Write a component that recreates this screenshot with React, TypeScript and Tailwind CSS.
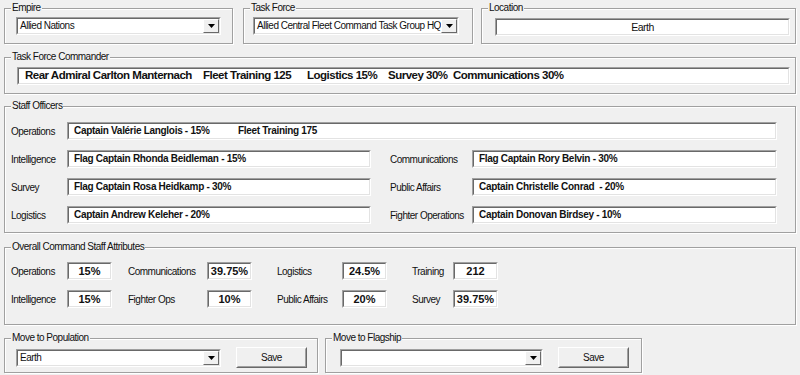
import React from "react";

function Group({ title, className, children }: { title: string; className?: string; children?: React.ReactNode }) {
    return (
        <div className={`relative border border-[#a0a0a0] shadow-[inset_1px_1px_0_#fff,1px_1px_0_#fff] ${className ?? ""}`}>
            <span className="absolute left-[6px] top-[-8px] bg-[#f0f0f0] px-[1px] leading-[14px] whitespace-nowrap">{title}</span>
            {children}
        </div>
    );
}

function Sunken({ className, children, center }: { className?: string; children?: React.ReactNode; center?: boolean }) {
    return (
        <div className={`shrink-0 border border-t-[#a0a0a0] border-l-[#a0a0a0] border-b-white border-r-white ${className ?? ""}`}>
            <div
                className={`h-full w-full overflow-hidden whitespace-pre border border-t-[#696969] border-l-[#696969] border-b-[#e3e3e3] border-r-[#e3e3e3] bg-white flex items-center leading-none ${center ? "justify-center" : ""}`}
            >
                {children}
            </div>
        </div>
    );
}

function Combo({ value, className }: { value: string; className?: string }) {
    return (
        <Sunken className={className}>
            <span className="flex-1 overflow-hidden pl-[2px]">{value}</span>
            <div className="h-full w-[16px] shrink-0 flex items-center justify-center bg-[#f0f0f0] border border-t-white border-l-white border-b-[#696969] border-r-[#696969]">
                <svg width="7" height="4" viewBox="0 0 7 4">
                    <path d="M0 0h7L3.5 4z" fill="#000" />
                </svg>
            </div>
        </Sunken>
    );
}

function SaveButton() {
    return (
        <div className="w-[71px] h-[21px] shrink-0 border border-t-white border-l-white border-b-[#696969] border-r-[#696969]">
            <div className="h-full w-full border border-t-[#f0f0f0] border-l-[#f0f0f0] border-b-[#a0a0a0] border-r-[#a0a0a0] flex items-center justify-center bg-[#f0f0f0]">
                Save
            </div>
        </div>
    );
}

const staffRows = [
    ["Intelligence", "Flag Captain Rhonda Beidleman - 15%", "Communications", "Flag Captain Rory Belvin - 30%"],
    ["Survey", "Flag Captain Rosa Heidkamp - 30%", "Public Affairs", "Captain Christelle Conrad  - 20%"],
    ["Logistics", "Captain Andrew Keleher - 20%", "Fighter Operations", "Captain Donovan Birdsey - 10%"],
];

const attrs = [
    ["Operations", "15%", "Communications", "39.75%", "Logistics", "24.5%", "Training", "212"],
    ["Intelligence", "15%", "Fighter Ops", "10%", "Public Affairs", "20%", "Survey", "39.75%"],
];

export default function App() {
    return (
        <div className="w-[800px] h-[375px] overflow-hidden bg-[#f0f0f0] text-[#111] text-[10px] tracking-[-0.5px] font-['Liberation_Sans',Arial,sans-serif] pt-[8px] px-[4px]">
            {/* top row */}
            <div className="flex">
                <Group title="Empire" className="w-[229px] h-[36px] pt-[8px] pl-[11px]">
                    <Combo value="Allied Nations" className="w-[205px] h-[18px]" />
                </Group>
                <Group title="Task Force" className="ml-[10px] w-[230px] h-[36px] pt-[8px] pl-[9px]">
                    <Combo value="Allied Central Fleet Command Task Group HQ" className="w-[206px] h-[18px]" />
                </Group>
                <Group title="Location" className="ml-[8px] w-[315px] h-[36px] pt-[9px] pl-[13px]">
                    <Sunken center className="w-[295px] h-[18px] text-[10.5px]">
                        Earth
                    </Sunken>
                </Group>
            </div>

            <Group title="Task Force Commander" className="mt-[13px] w-[792px] h-[37px] pt-[9px] pl-[12px]">
                <Sunken className="w-[773px] h-[18px] font-bold text-[11.5px] tracking-[-0.5px]">
                    <span className="pl-[6px] w-[184px] shrink-0">Rear Admiral Carlton Manternach</span>
                    <span className="w-[104px] shrink-0">Fleet Training 125</span>
                    <span className="w-[81px] shrink-0">Logistics 15%</span>
                    <span className="w-[65px] shrink-0">Survey 30%</span>
                    <span>Communications 30%</span>
                </Sunken>
            </Group>

            <Group title="Staff Officers" className="mt-[12px] w-[792px] h-[127px] pt-[15px] pl-[6px] flex flex-col gap-[10px]">
                <div className="flex items-center whitespace-nowrap">
                    <span className="w-[56px] shrink-0">Operations</span>
                    <Sunken className="w-[710px] h-[18px] font-bold tracking-[-0.3px]">
                        <span className="pl-[5px] w-[169px] shrink-0">Captain Valérie Langlois - 15%</span>
                        <span>Fleet Training 175</span>
                    </Sunken>
                </div>
                {staffRows.map((r) => (
                    <div key={r[0]} className="flex items-center whitespace-nowrap">
                        <span className="w-[56px] shrink-0">{r[0]}</span>
                        <Sunken className="w-[304px] h-[18px] font-bold tracking-[-0.3px]">
                            <span className="pl-[5px]">{r[1]}</span>
                        </Sunken>
                        <span className="ml-[19px] w-[82px] shrink-0">{r[2]}</span>
                        <Sunken className="w-[305px] h-[18px] font-bold tracking-[-0.3px]">
                            <span className="pl-[5px]">{r[3]}</span>
                        </Sunken>
                    </div>
                ))}
            </Group>

            <Group title="Overall Command Staff Attributes" className="mt-[14px] w-[792px] h-[78px] pt-[14px] pl-[6px] flex flex-col gap-[10px]">
                {attrs.map((r) => (
                    <div key={r[0]} className="flex items-center whitespace-nowrap">
                        <span className="w-[56px] shrink-0">{r[0]}</span>
                        <Sunken center className="w-[45px] h-[18px] font-bold text-[11px] tracking-normal">{r[1]}</Sunken>
                        <span className="ml-[16px] w-[79px] shrink-0">{r[2]}</span>
                        <Sunken center className="w-[45px] h-[18px] font-bold text-[11px] tracking-normal">{r[3]}</Sunken>
                        <span className="ml-[25px] w-[65px] shrink-0">{r[4]}</span>
                        <Sunken center className="w-[45px] h-[18px] font-bold text-[11px] tracking-normal">{r[5]}</Sunken>
                        <span className="ml-[25px] w-[41px] shrink-0">{r[6]}</span>
                        <Sunken center className="w-[45px] h-[18px] font-bold text-[11px] tracking-normal">{r[7]}</Sunken>
                    </div>
                ))}
            </Group>

            <div className="mt-[13px] flex">
                <Group title="Move to Population" className="w-[314px] h-[35px] pt-[8px] pl-[11px] flex items-start">
                    <Combo value="Earth" className="mt-[2px] w-[205px] h-[18px]" />
                    <div className="ml-[15px]">
                        <SaveButton />
                    </div>
                </Group>
                <Group title="Move to Flagship" className="ml-[7px] w-[317px] h-[35px] pt-[8px] pl-[14px] flex items-start">
                    <Combo value="" className="mt-[2px] w-[203px] h-[18px]" />
                    <div className="ml-[15px]">
                        <SaveButton />
                    </div>
                </Group>
            </div>
        </div>
    );
}
